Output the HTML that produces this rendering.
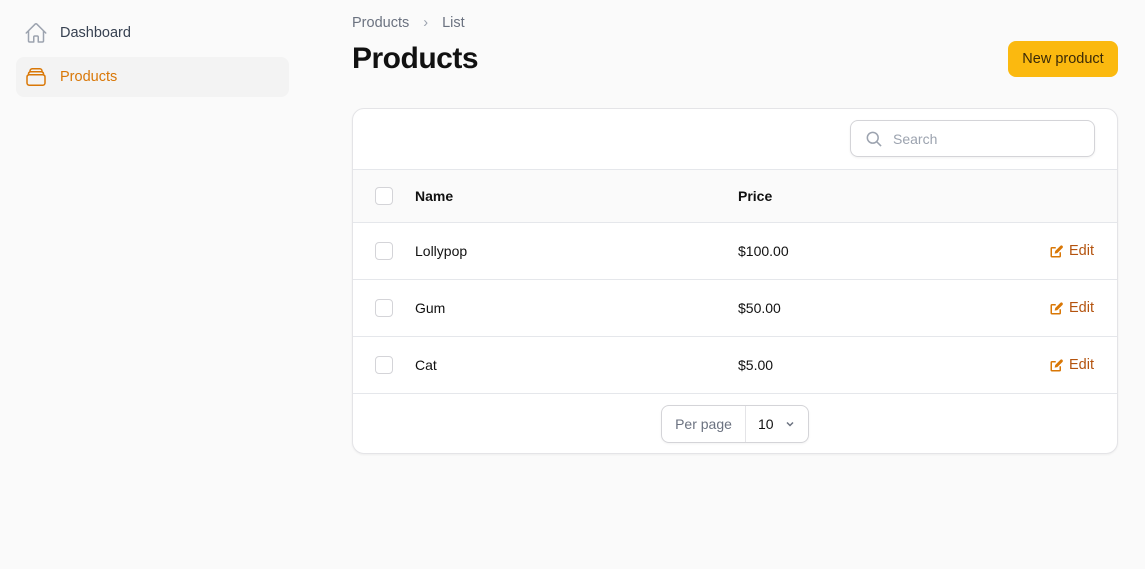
<!DOCTYPE html>
<html><head><style>
*{box-sizing:border-box;margin:0;padding:0}
body{width:1145px;height:569px;background:#fafafa;font-family:"Liberation Sans",sans-serif;color:#111;position:relative;overflow:hidden;font-size:14px}
.nav{position:absolute;left:16px;width:273px;height:40px;border-radius:8px;display:flex;align-items:center;padding-left:8px;font-size:14.5px}
.nav svg{margin-right:12px}
.abs{position:absolute}
.card{position:absolute;left:352px;top:108px;width:766px;height:346px;background:#fff;border:1px solid #e4e4e7;border-radius:12px;box-shadow:0 1px 2px rgba(0,0,0,.05);overflow:hidden}
.row{position:absolute;left:-1px;width:766px;border-top:1px solid #e5e7eb;display:flex;align-items:center}
.cb{position:absolute;left:23px;width:18px;height:18px;border:1px solid #d4d4d8;border-radius:4px;background:#fff}
.edit{position:absolute;left:697px;color:#b4530e;display:flex;align-items:center;gap:5px;font-size:14.5px}
</style></head><body>
<div class="nav" style="top:13px;color:#374151">
<svg width="24" height="24" viewBox="0 0 24 24" fill="none" stroke="#9ca3af" stroke-width="1.5" stroke-linecap="round" stroke-linejoin="round"><path d="M2.25 12 11.2 3.05a1.13 1.13 0 0 1 1.6 0L21.75 12M4.5 9.75v10.13c0 .62.5 1.12 1.13 1.12H9.75v-4.88c0-.62.5-1.12 1.13-1.12h2.25c.62 0 1.12.5 1.12 1.12V21h4.13c.62 0 1.12-.5 1.12-1.12V9.75"/></svg>Dashboard</div>
<div class="nav" style="top:57px;background:#f3f3f3;color:#d97706">
<svg width="24" height="24" viewBox="0 0 24 24" fill="none" stroke="#d97706" stroke-width="1.5" stroke-linecap="round" stroke-linejoin="round"><path d="M6 6.878V6a2.25 2.25 0 0 1 2.25-2.25h7.5A2.25 2.25 0 0 1 18 6v.878m-12 0c.235-.083.487-.128.75-.128h10.5c.263 0 .515.045.75.128m-12 0A2.25 2.25 0 0 0 4.5 9v.878m13.5-3A2.25 2.25 0 0 1 19.5 9v.878m0 0a2.25 2.25 0 0 0-.75-.128H5.25c-.263 0-.515.045-.75.128m15 0A2.25 2.25 0 0 1 21 12v6a2.25 2.25 0 0 1-2.25 2.25H5.25A2.25 2.25 0 0 1 3 18v-6c0-.98.626-1.813 1.5-2.122"/></svg>Products</div>
<div class="abs" style="left:352px;top:15px;font-size:14.5px;color:#6b7280">Products <span style="margin:0 10px;color:#9ca3af">&#8250;</span> List</div>
<div class="abs" style="left:352px;top:42px;font-size:30px;font-weight:700;letter-spacing:-.5px">Products</div>
<div class="abs" style="left:1008px;top:41px;width:110px;height:36px;border-radius:8px;font-size:14.5px;display:flex;align-items:center;justify-content:center;color:#3b2a08;background:#fbb90f">New product</div>
<div class="card">
<div class="abs" style="left:497px;top:11px;width:245px;height:37px;border:1px solid #d4d4d8;border-radius:8px;box-shadow:0 1px 2px rgba(0,0,0,.06);display:flex;align-items:center;padding-left:13px;color:#9ca3af">
<svg width="20" height="20" viewBox="0 0 24 24" fill="none" stroke="#9ca3af" stroke-width="1.8"><circle cx="10.5" cy="10.5" r="6.5"/><path d="m15.5 15.5 5 5"/></svg><span style="margin-left:9px">Search</span></div>
<div class="row" style="top:60px;height:53px;background:#fafafa;font-weight:700"><div class="cb"></div><span class="abs" style="left:63px">Name</span><span class="abs" style="left:386px">Price</span></div>
<div class="row" style="top:113px;height:57px"><div class="cb"></div><span class="abs" style="left:63px">Lollypop</span><span class="abs" style="left:386px">$100.00</span><span class="edit"><svg width="15" height="15" viewBox="0 0 20 20" fill="#d97706"><path d="M15.3 2.3a2 2 0 0 1 2.8 2.8l-7 7-3.6.8.8-3.6zM4 4h5v2H4v10h10v-5h2v5a2 2 0 0 1-2 2H4a2 2 0 0 1-2-2V6a2 2 0 0 1 2-2z"/></svg>Edit</span></div>
<div class="row" style="top:170px;height:57px"><div class="cb"></div><span class="abs" style="left:63px">Gum</span><span class="abs" style="left:386px">$50.00</span><span class="edit"><svg width="15" height="15" viewBox="0 0 20 20" fill="#d97706"><path d="M15.3 2.3a2 2 0 0 1 2.8 2.8l-7 7-3.6.8.8-3.6zM4 4h5v2H4v10h10v-5h2v5a2 2 0 0 1-2 2H4a2 2 0 0 1-2-2V6a2 2 0 0 1 2-2z"/></svg>Edit</span></div>
<div class="row" style="top:227px;height:57px"><div class="cb"></div><span class="abs" style="left:63px">Cat</span><span class="abs" style="left:386px">$5.00</span><span class="edit"><svg width="15" height="15" viewBox="0 0 20 20" fill="#d97706"><path d="M15.3 2.3a2 2 0 0 1 2.8 2.8l-7 7-3.6.8.8-3.6zM4 4h5v2H4v10h10v-5h2v5a2 2 0 0 1-2 2H4a2 2 0 0 1-2-2V6a2 2 0 0 1 2-2z"/></svg>Edit</span></div>
<div class="row" style="top:284px;height:61px"></div>
<div class="abs" style="left:308px;top:296px;width:148px;height:38px;border:1px solid #d4d4d8;border-radius:8px;display:flex;align-items:center;box-shadow:0 1px 2px rgba(0,0,0,.05)">
<span style="width:84px;height:100%;border-right:1px solid #e4e4e7;display:flex;align-items:center;justify-content:center;color:#6b7280">Per page</span>
<span style="margin-left:12px">10</span>
<svg style="margin-left:10px" width="12" height="12" viewBox="0 0 12 12" fill="none" stroke="#6b7280" stroke-width="1.5"><path d="m3 4.5 3 3 3-3"/></svg></div>
</div>
</body></html>
